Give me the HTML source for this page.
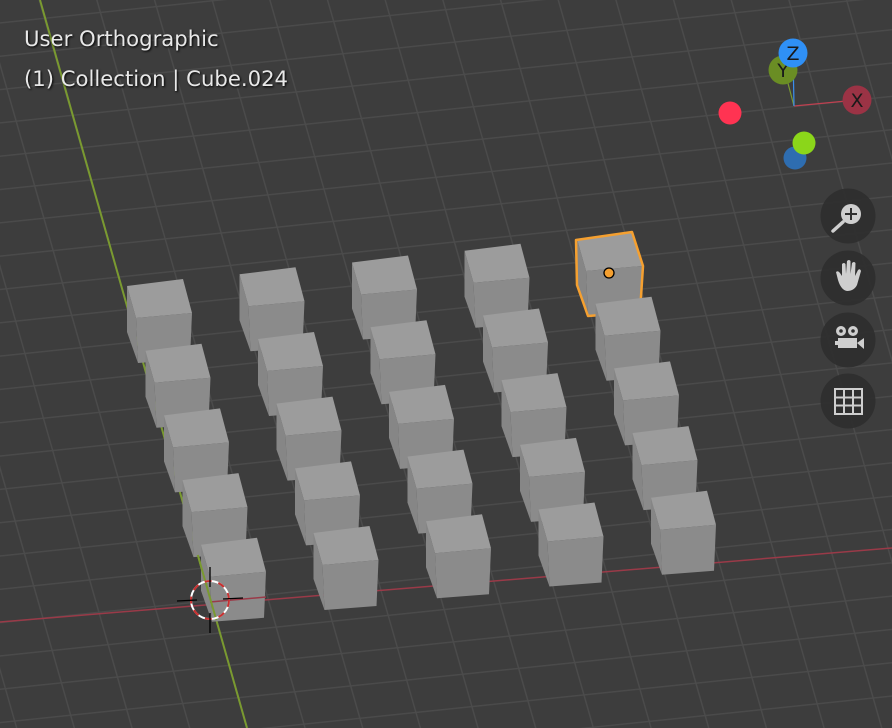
<!DOCTYPE html>
<html><head><meta charset="utf-8"><style>
html,body{margin:0;padding:0;width:892px;height:728px;overflow:hidden;background:#3d3d3d}
svg{position:absolute;left:0;top:0}
.t{position:absolute;left:24px;font-family:"DejaVu Sans","Liberation Sans",sans-serif;font-size:21.2px;color:#e8e8e8;text-shadow:1px 1px 2px #000;white-space:nowrap}
</style></head><body>
<svg width="892" height="728" viewBox="0 0 892 728">
<defs>
<pattern id="g" patternUnits="userSpaceOnUse" width="100" height="100" patternTransform="matrix(0.56,-0.0585,0.0925,0.3235,210,600)">
<rect x="0" y="0" width="100" height="100" fill="#3d3d3d"/>
<rect x="0" y="0" width="2.6" height="100" fill="#4b4b4b"/>
<rect x="0" y="0" width="100" height="4.2" fill="#4b4b4b"/>
</pattern>
<g id="c">
<polygon points="0,6 9,38 11,83 0,52" fill="#868686"/>
<polygon points="9,38 65,33 63,79 11,83" fill="#8b8b8b"/>
<polygon points="0,6 56,-1 65,33 9,38" fill="#9c9c9c"/>
</g>
</defs>
<rect width="892" height="728" fill="url(#g)"/>
<line x1="0" y1="622" x2="892" y2="548" stroke="#9a3a48" stroke-width="1.5"/>
<line x1="40" y1="0" x2="247" y2="728" stroke="#7a9a30" stroke-width="2"/>
<use href="#c" x="127" y="280"/><use href="#c" x="239.5" y="268.25"/><use href="#c" x="352" y="256.5"/><use href="#c" x="464.5" y="244.75"/><use href="#c" x="577" y="233"/>
<polygon points="576,240 632,232 643,266 640,312 588,316 577,285" fill="none" stroke="#f5a030" stroke-width="2.5" stroke-linejoin="round"/>
<circle cx="609" cy="273" r="5" fill="#f5a030" stroke="#000" stroke-width="1.3"/>
<use href="#c" x="145.5" y="344.7"/><use href="#c" x="258" y="332.95"/><use href="#c" x="370.5" y="321.2"/><use href="#c" x="483" y="309.45"/><use href="#c" x="595.5" y="297.7"/>
<use href="#c" x="164" y="409.4"/><use href="#c" x="276.5" y="397.65"/><use href="#c" x="389" y="385.9"/><use href="#c" x="501.5" y="374.15"/><use href="#c" x="614" y="362.4"/>
<use href="#c" x="182.5" y="474.1"/><use href="#c" x="295" y="462.35"/><use href="#c" x="407.5" y="450.6"/><use href="#c" x="520" y="438.85"/><use href="#c" x="632.5" y="427.1"/>
<use href="#c" x="201" y="538.8"/><use href="#c" x="313.5" y="527.05"/><use href="#c" x="426" y="515.3"/><use href="#c" x="538.5" y="503.55"/><use href="#c" x="651" y="491.8"/>
<line x1="210" y1="602" x2="266" y2="597" stroke="#9a3a48" stroke-width="1.5"/>
<line x1="197.8" y1="555" x2="216.3" y2="620" stroke="#7a9a30" stroke-width="2"/>
<circle cx="210" cy="600" r="19" fill="none" stroke="#fff" stroke-width="2"/>
<circle cx="210" cy="600" r="19" fill="none" stroke="#c83030" stroke-width="2" stroke-dasharray="7 7"/>
<line x1="210" y1="567" x2="210" y2="587" stroke="#000" stroke-width="1.3"/>
<line x1="210" y1="613" x2="210" y2="633" stroke="#000" stroke-width="1.3"/>
<line x1="177" y1="601" x2="197" y2="600" stroke="#000" stroke-width="1.3"/>
<line x1="223" y1="599" x2="243" y2="598" stroke="#000" stroke-width="1.3"/>
<line x1="794" y1="106" x2="857" y2="100" stroke="#c04050" stroke-width="1.2"/>
<line x1="794" y1="106" x2="785" y2="72" stroke="#7a9a30" stroke-width="1.2"/>
<line x1="794" y1="106" x2="793" y2="55" stroke="#3a8ff0" stroke-width="1.2"/>
<circle cx="730" cy="113" r="11.5" fill="#ff3352"/>
<circle cx="795" cy="158" r="11.5" fill="#2e6db0"/>
<circle cx="804" cy="143" r="11.5" fill="#8bd61a"/>
<circle cx="857" cy="100" r="14.5" fill="#9b3345"/>
<text x="857" y="107" font-family="DejaVu Sans,sans-serif" font-size="19" text-anchor="middle" fill="#1a1a1a">X</text>
<circle cx="783" cy="70" r="14.5" fill="#6a8d24"/>
<text x="783" y="77" font-family="DejaVu Sans,sans-serif" font-size="19" text-anchor="middle" fill="#1a1a1a">Y</text>
<circle cx="793" cy="53" r="14.5" fill="#2f90f6"/>
<text x="793" y="60" font-family="DejaVu Sans,sans-serif" font-size="19" text-anchor="middle" fill="#1a1a1a">Z</text>
<g fill="#2e2e2e" opacity="0.9">
<circle cx="848" cy="216" r="27.5"/><circle cx="848" cy="278" r="27.5"/><circle cx="848" cy="340" r="27.5"/><circle cx="848" cy="401" r="27.5"/>
</g>
<g fill="#cfcfcf" stroke="#cfcfcf">
<circle cx="851" cy="214" r="10" stroke="none"/>
<line x1="843" y1="222" x2="833" y2="231" stroke-width="3.5" stroke-linecap="round"/>
<path d="M851 208v12M845 214h12" stroke="#2e2e2e" stroke-width="2" fill="none"/>
<path d="M838 280 L836 272 Q838 270 840 273 L842 276 L842 264 Q844 262 845.5 264 L846 274 L847 261 Q849 259 850.5 261 L850.5 274 L852 263 Q854 261 855.5 263 L855 276 L858 270 Q860 268 861 271 L857 285 Q854 291 847 291 Q841 290 838 280Z" stroke="none"/>
<circle cx="841" cy="331" r="5" stroke="none"/><circle cx="853" cy="331" r="5" stroke="none"/>
<circle cx="841" cy="331" r="1.8" fill="#2e2e2e" stroke="none"/><circle cx="853" cy="331" r="1.8" fill="#2e2e2e" stroke="none"/>
<rect x="838" y="338" width="19" height="10" stroke="none"/>
<rect x="835" y="341" width="4" height="4" stroke="none"/>
<polygon points="857,343 864,338 864,349" stroke="none"/>
<g fill="none" stroke-width="2"><rect x="835" y="389" width="27" height="25"/><path d="M844 389v25M853 389v25M835 397.5h27M835 405.5h27"/></g>
</g>
</svg>
<div class="t" style="top:26px">User Orthographic</div>
<div class="t" style="top:66px">(1) Collection | Cube.024</div>
</body></html>
